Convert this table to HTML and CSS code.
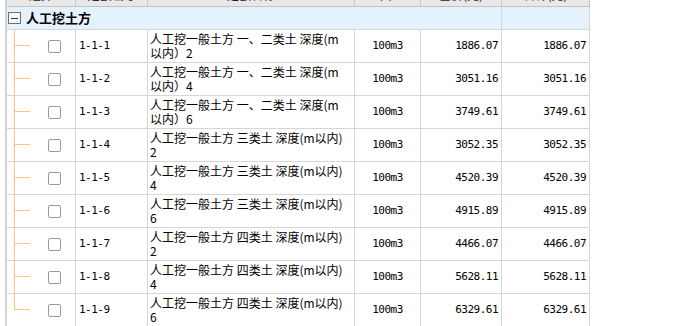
FILE: index.html
```html
<!DOCTYPE html>
<html lang="zh-CN">
<head>
<meta charset="utf-8">
<title>定额列表</title>
<link rel="stylesheet" href="styles.css">
</head>
<body>
<div class="viewport">
  <div class="grid">
    <div class="cell hd">选择</div>
    <div class="cell hd">定额编号</div>
    <div class="cell hd">定额名称</div>
    <div class="cell hd">单位</div>
    <div class="cell hd">基价(元)</div>
    <div class="cell hd">合计(元)</div>

    <div class="cell group-name"><span class="toggle"><span class="minus"></span></span><span class="group-title">人工挖土方</span></div>
    <div class="cell group-end"></div>

    <div class="cell tree"><span class="check"></span></div>
    <div class="cell code">1-1-1</div>
    <div class="cell name">人工挖一般土方 一、二类土 深度(m<br>以内）2</div>
    <div class="cell unit">100m3</div>
    <div class="cell num">1886.07</div>
    <div class="cell num">1886.07</div>

    <div class="cell tree"><span class="check"></span></div>
    <div class="cell code">1-1-2</div>
    <div class="cell name">人工挖一般土方 一、二类土 深度(m<br>以内）4</div>
    <div class="cell unit">100m3</div>
    <div class="cell num">3051.16</div>
    <div class="cell num">3051.16</div>

    <div class="cell tree"><span class="check"></span></div>
    <div class="cell code">1-1-3</div>
    <div class="cell name">人工挖一般土方 一、二类土 深度(m<br>以内）6</div>
    <div class="cell unit">100m3</div>
    <div class="cell num">3749.61</div>
    <div class="cell num">3749.61</div>

    <div class="cell tree"><span class="check"></span></div>
    <div class="cell code">1-1-4</div>
    <div class="cell name">人工挖一般土方 三类土 深度(m以内)<br>2</div>
    <div class="cell unit">100m3</div>
    <div class="cell num">3052.35</div>
    <div class="cell num">3052.35</div>

    <div class="cell tree"><span class="check"></span></div>
    <div class="cell code">1-1-5</div>
    <div class="cell name">人工挖一般土方 三类土 深度(m以内)<br>4</div>
    <div class="cell unit">100m3</div>
    <div class="cell num">4520.39</div>
    <div class="cell num">4520.39</div>

    <div class="cell tree"><span class="check"></span></div>
    <div class="cell code">1-1-6</div>
    <div class="cell name">人工挖一般土方 三类土 深度(m以内)<br>6</div>
    <div class="cell unit">100m3</div>
    <div class="cell num">4915.89</div>
    <div class="cell num">4915.89</div>

    <div class="cell tree"><span class="check"></span></div>
    <div class="cell code">1-1-7</div>
    <div class="cell name">人工挖一般土方 四类土 深度(m以内)<br>2</div>
    <div class="cell unit">100m3</div>
    <div class="cell num">4466.07</div>
    <div class="cell num">4466.07</div>

    <div class="cell tree"><span class="check"></span></div>
    <div class="cell code">1-1-8</div>
    <div class="cell name">人工挖一般土方 四类土 深度(m以内)<br>4</div>
    <div class="cell unit">100m3</div>
    <div class="cell num">5628.11</div>
    <div class="cell num">5628.11</div>

    <div class="cell tree last"><span class="check"></span></div>
    <div class="cell code">1-1-9</div>
    <div class="cell name">人工挖一般土方 四类土 深度(m以内)<br>6</div>
    <div class="cell unit">100m3</div>
    <div class="cell num">6329.61</div>
    <div class="cell num">6329.61</div>
  </div>
</div>
</body>
</html>
```
FILE: styles.css
```css
html, body {
  margin: 0;
  padding: 0;
  background: #ffffff;
}

body {
  font-family: "Noto Sans CJK SC", "Noto Sans", sans-serif;
  font-size: 12px;
  color: #111;
}

.viewport {
  width: 683px;
  height: 326px;
  overflow: hidden;
}

.grid {
  display: grid;
  grid-template-columns: 69px 72px 207px 66px 81px 88px;
  grid-template-rows: 23px 23px;
  grid-auto-rows: 33px;
  width: max-content;
  margin-top: -16px;
  margin-left: 5px;
  border-left: 2px solid #d3d3d3;
}

.cell {
  box-sizing: border-box;
  border-right: 1px solid #d6d6d6;
  border-bottom: 1px solid #d6d6d6;
  display: flex;
  align-items: center;
  line-height: 14px;
  white-space: nowrap;
}

.hd {
  background: #e8e8e8;
  border-right-color: #c8c8c8;
  border-bottom-color: #c4c4c4;
  justify-content: center;
  color: #222;
}

.group-name {
  grid-column: span 5;
  background: #e4f2fd;
  padding-left: 1px;
}

.group-end {
  background: #e4f2fd;
}

.toggle {
  box-sizing: border-box;
  width: 13px;
  height: 12px;
  border: 1px solid #707070;
  background: #f6f6f6;
  display: flex;
  align-items: center;
  justify-content: center;
}

.minus {
  width: 7px;
  height: 1px;
  background: #333;
}

.group-title {
  margin-left: 5px;
  font-size: 13px;
  font-weight: bold;
  color: #000;
}

.tree {
  position: relative;
  padding-left: 41px;
}

.tree::before {
  content: "";
  position: absolute;
  left: 7px;
  top: 0;
  bottom: -1px;
  width: 1px;
  background: #fcc77c;
}

.tree.last::before {
  bottom: 16px;
}

.tree::after {
  content: "";
  position: absolute;
  left: 7px;
  top: 15px;
  width: 16px;
  height: 1px;
  background: #fcc77c;
}

.check {
  box-sizing: border-box;
  width: 13px;
  height: 13px;
  border: 1px solid #9a9a9a;
  border-radius: 2px;
  background: #fff;
}

.code,
.unit,
.num {
  font-family: "DejaVu Sans Mono", "Liberation Mono", monospace;
  font-size: 11px;
  letter-spacing: -0.5px;
  color: #000;
}

.code {
  padding-left: 3px;
}

.name {
  padding-left: 2px;
  color: #000;
}

.unit {
  justify-content: center;
}

.num {
  justify-content: flex-end;
  padding-right: 3px;
}
```
